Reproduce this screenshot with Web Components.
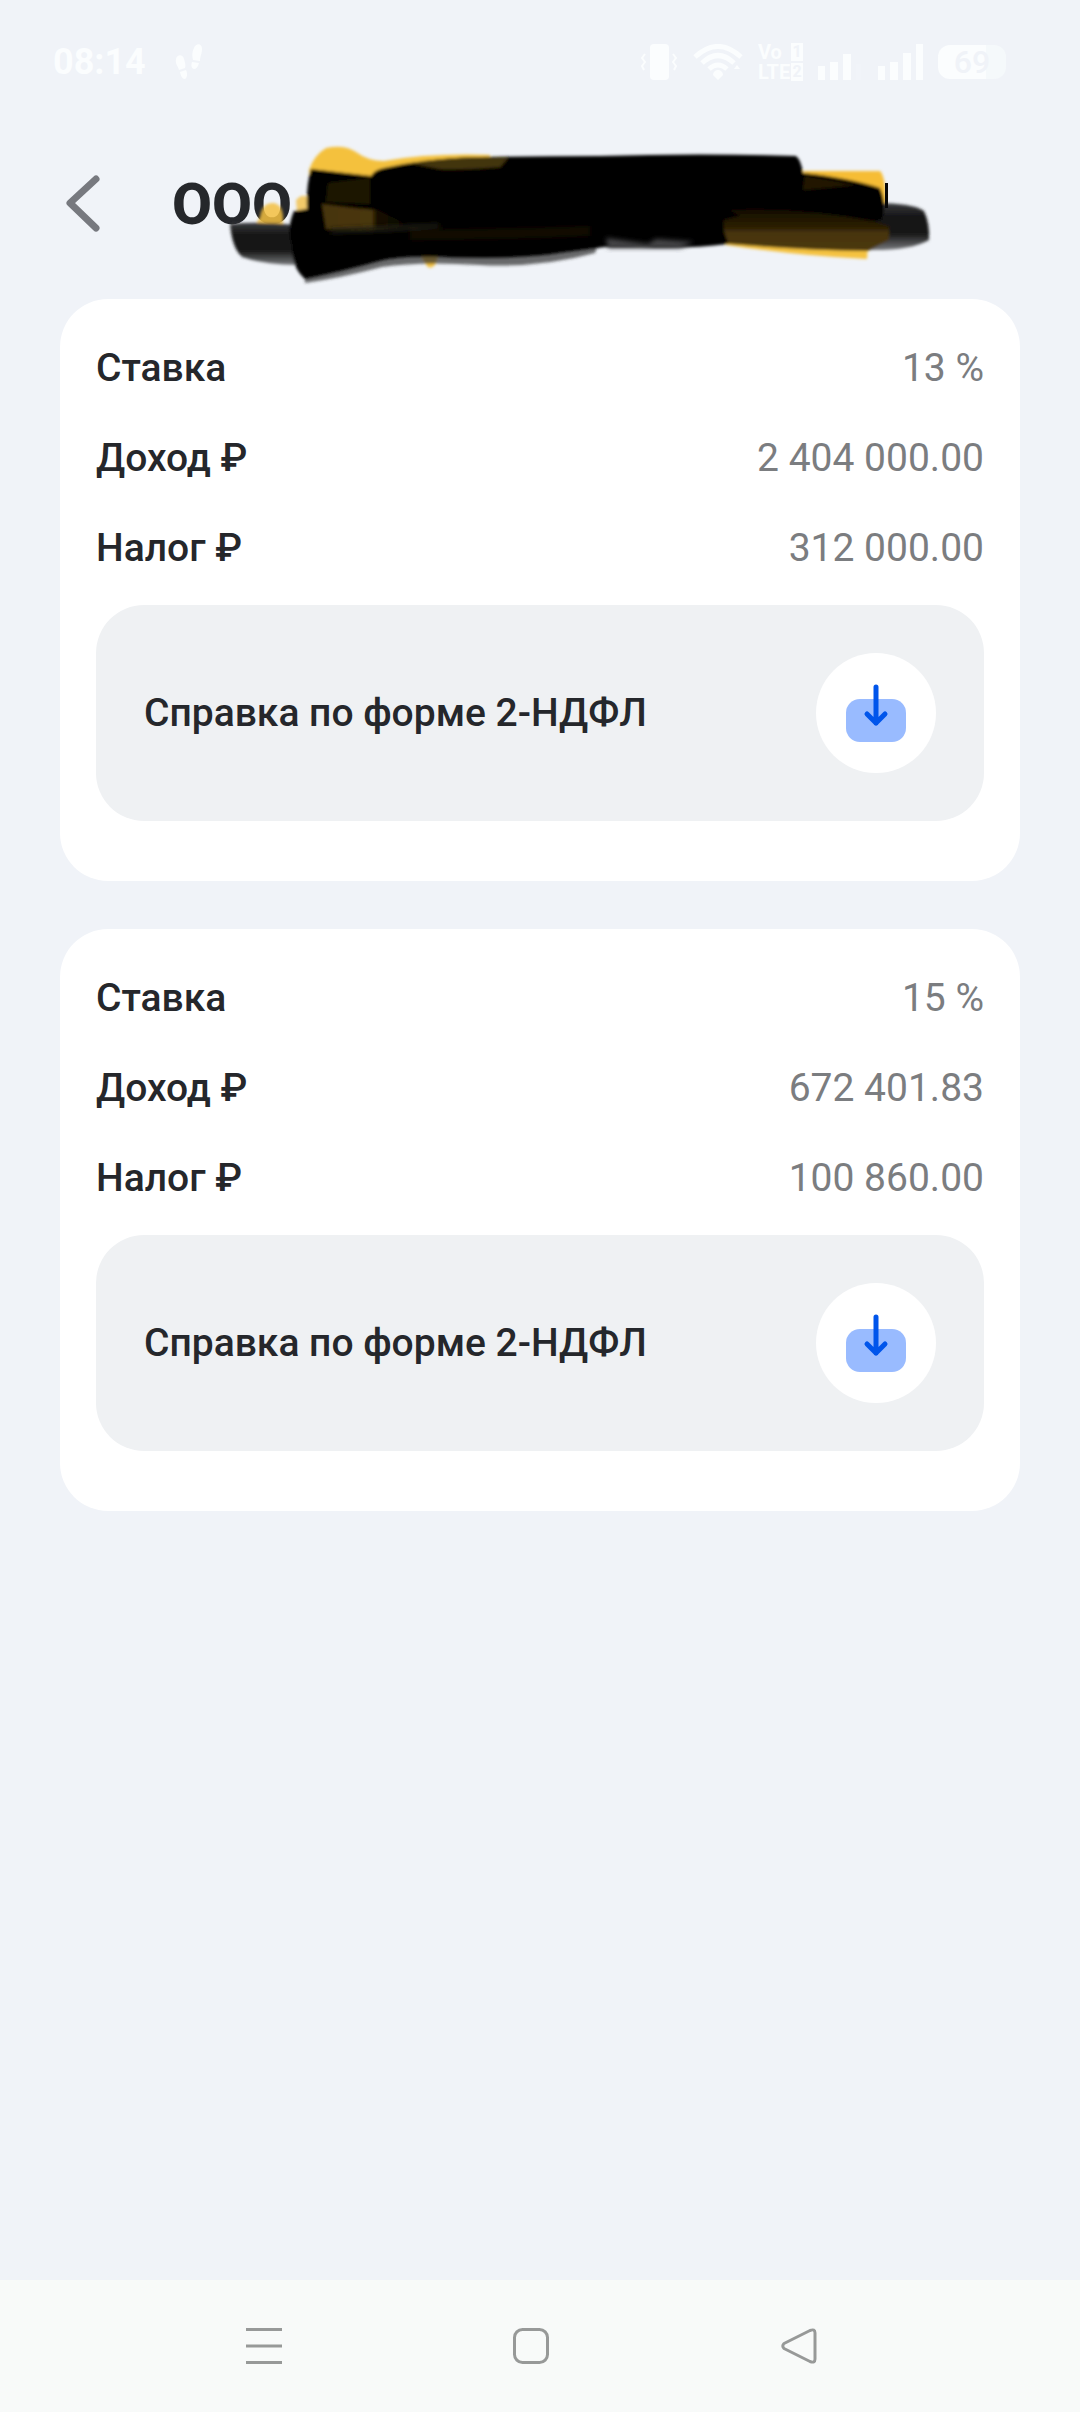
<!DOCTYPE html>
<html lang="ru">
<head>
<meta charset="utf-8">
<meta name="viewport" content="width=device-width">
<title>Справка о доходах</title>
<style>
  body {
    margin: 0;
    background: #f0f3f8;
    color: #25272b;
    font-family: Roboto, "Noto Sans", sans-serif;
  }
</style>
</head>
<body>
<income-page>
  <status-bar slot="status" time="08:14" battery="69"></status-bar>
  <page-header slot="header">ООО</page-header>
  <tax-card>
    <tax-row label="Ставка">13 %</tax-row>
    <tax-row label="Доход ₽">2 404 000.00</tax-row>
    <tax-row label="Налог ₽">312 000.00</tax-row>
    <download-panel slot="action">Справка по форме 2-НДФЛ</download-panel>
  </tax-card>
  <tax-card>
    <tax-row label="Ставка">15 %</tax-row>
    <tax-row label="Доход ₽">672 401.83</tax-row>
    <tax-row label="Налог ₽">100 860.00</tax-row>
    <download-panel slot="action">Справка по форме 2-НДФЛ</download-panel>
  </tax-card>
  <nav-bar slot="nav"></nav-bar>
</income-page>

<script>
const define = (name, html, setup) => {
  const template = document.createElement("template");
  template.innerHTML = html;
  customElements.define(name, class extends HTMLElement {
    constructor() {
      super();
      this.attachShadow({ mode: "open" });
      this.shadowRoot.appendChild(template.content.cloneNode(true));
    }

    connectedCallback() {
      if (setup) setup(this, this.shadowRoot);
    }
  });
};

define("income-page", /*html*/`
  <style>
    :host {
      display: flex;
      flex-direction: column;
      min-height: 100vh;
    }

    main {
      flex: 1;
      display: flex;
      flex-direction: column;
      gap: 48px;
      padding: 16px 60px 48px;
    }
  </style>
  <slot name="status"></slot>
  <slot name="header"></slot>
  <main><slot></slot></main>
  <slot name="nav"></slot>`);

define("status-bar", /*html*/`
  <style>
    :host {
      display: flex;
      align-items: center;
      height: 124px;
      padding: 0 74px 0 53px;
      box-sizing: border-box;
      color: #fbfdfe;
      fill: currentColor;
    }

    svg { display: block; }

    .time {
      font-size: 36px;
      line-height: 40px;
      font-weight: 700;
    }

    .steps { margin-left: 28px; }

    .icons {
      display: flex;
      align-items: center;
      gap: 15px;
      margin-left: auto;
    }

    .volte {
      display: grid;
      grid-template-columns: 33px 12px;
      grid-auto-rows: 20px;
      align-items: center;
      font-size: 20px;
      line-height: 20px;
      font-weight: 700;
    }

    .sim {
      background: currentColor;
      font-size: 16px;
      line-height: 18px;
      text-align: center;
    }

    .sim span { color: #f0f3f8; }

    .battery {
      width: 68px;
      height: 34px;
      border-radius: 12px;
      background: linear-gradient(90deg, #fbfdfe 70%, #f5f9fb 70%);
      color: #f0f3f8;
      font-size: 32px;
      line-height: 34px;
      font-weight: 500;
      text-align: center;
    }
  </style>
  <span class="time"></span>
  <svg class="steps" width="30" height="36" viewBox="0 0 30 36">
    <path d="M2 15c1-5 7-5 8 0 1 4 2 6 1 9l-6 2c-1-4-4-6-3-11zM6 28l6-2c2 4 1 8-1 9-3 0-4-3-5-7z"/>
    <path d="M20 4c2-5 8-5 8 1 0 5-2 7-2 12l-7-1c-1-4-1-8 1-12zM18 18l7 1c-1 4-3 6-5 6-3-1-3-4-2-7z"/>
  </svg>
  <div class="icons">
    <svg width="38" height="36" viewBox="0 0 38 36">
      <rect x="10" y="0" width="19" height="36" rx="4"/>
      <path d="M5 10l-3 4 3 4-3 4 2 4M33 10l3 4-3 4 3 4-2 4" fill="none" stroke="currentColor" stroke-width="2"/>
    </svg>
    <svg width="50" height="36" viewBox="0 0 50 36">
      <g fill="none" stroke="currentColor" stroke-width="5">
        <path d="M2 13Q25-8 48 13M9 19Q25 4 41 19M16 25Q25 17 34 25"/>
      </g>
      <path d="M25 26a5 5 0 0 1 5 5l-5 5-5-5a5 5 0 0 1 5-5zM41 25l3-4 3 4z"/>
    </svg>
    <div class="volte">
      <span>Vo</span><span class="sim"><span>1</span></span>
      <span>LTE</span><span class="sim"><span>2</span></span>
    </div>
    <svg width="45" height="36" viewBox="0 0 45 36">
      <path d="M0 22h7v14H0zM12 18h8v18h-8zM25 10h8v26h-8z"/>
      <path d="M38 20h5v16h-5z" opacity=".15"/>
    </svg>
    <svg width="45" height="36" viewBox="0 0 45 36">
      <path d="M0 22h7v14H0zM12 18h8v18h-8zM25 9h8v27h-8zM38 0h7v36h-7z"/>
    </svg>
    <div class="battery"></div>
  </div>`, (host, root) => {
    root.querySelector(".time").textContent = host.getAttribute("time");
    root.querySelector(".battery").textContent = host.getAttribute("battery");
  });

define("page-header", /*html*/`
  <style>
    :host {
      position: relative;
      display: flex;
      align-items: center;
      gap: 64px;
      height: 159px;
      padding: 0 60px 0 58px;
      box-sizing: border-box;
    }

    button {
      padding: 0;
      border: 0;
      background: none;
      cursor: pointer;
    }

    svg { display: block; }

    h1 {
      margin: 0;
      font-size: 58px;
      line-height: 64px;
      font-weight: 800;
    }

    /* marker strokes hiding the rest of the name */
    .marker {
      position: absolute;
      left: 0;
      top: 0;
      pointer-events: none;
    }
  </style>
  <button type="button" aria-label="Назад">
    <svg width="50" height="64" viewBox="0 0 50 64" fill="none" stroke="#77797f" stroke-width="7" stroke-linecap="round" stroke-linejoin="round">
      <path d="M38 7L12 31l26 25"/>
    </svg>
  </button>
  <h1><slot></slot></h1>
  <svg class="marker" width="1080" height="175" viewBox="0 124 1080 175" aria-hidden="true">
    <defs>
      <filter id="soft" x="-5%" y="-10%" width="110%" height="120%"><feGaussianBlur stdDeviation="1.4"/></filter>
      <filter id="softer" x="-20%" y="-20%" width="140%" height="140%"><feGaussianBlur stdDeviation="2.4"/></filter>
      <linearGradient id="tail" x1="0" y1="0" x2="0" y2="1">
        <stop offset="0" stop-color="#3a3b3e"/><stop offset=".3" stop-color="#151515"/>
        <stop offset=".65" stop-color="#141414"/><stop offset="1" stop-color="#77797c"/>
      </linearGradient>
      <linearGradient id="brown" x1="0" y1="0" x2="0" y2="1">
        <stop offset="0" stop-color="#140d00"/><stop offset=".45" stop-color="#2c1f04"/>
        <stop offset=".55" stop-color="#46340d"/><stop offset="1" stop-color="#4c3911"/>
      </linearGradient>
      <linearGradient id="patch" x1="0" y1="0" x2="1" y2="0">
        <stop offset="0" stop-color="#463409"/><stop offset=".55" stop-color="#4a370b"/>
        <stop offset=".6" stop-color="#1a1200"/><stop offset="1" stop-color="#000"/>
      </linearGradient>
    </defs>
    <g filter="url(#soft)">
      <path fill="#f3bf40" fill-opacity=".85" d="M260 217Q262 202 274 203Q284 205 283 222L280 230H263L257 222z"/>
      <path fill="#f2ca6a" d="M296 200Q303 192 310 199V222H298z"/>
      <path fill="#f4c13d" d="M309 170Q314 155 326 148Q344 144 356 152Q368 161 384 161Q430 153 490 155V180H310z"/>
      <path fill="#f6bd35" d="M802 171H880Q886 177 886 206L840 200z"/>
      <path fill="#f5c23f" d="M726 242L868 244L867 259Q800 256 726 245zM421 256H438L435 265Q430 270 427 266z"/>
      <path fill="url(#tail)" d="M230 224Q260 221 296 225V265Q262 264 242 257Q232 248 230 224z"/>
      <path fill="url(#tail)" d="M866 203Q912 202 924 211Q930 224 929 240Q910 251 866 250z"/>
      <!-- translucent rim along the underside of the strokes -->
      <path fill="#2d2d2e" fill-opacity=".7" d="M304 260L600 240L595 253Q540 268 480 265Q420 261 382 267Q340 278 305 283z"/>
      <path fill="#000" d="M311 169L371 176Q374 170 384 168Q430 158 480 157Q540 156 600 156Q700 153 796 156Q801 160 803 173Q850 178 880 188Q887 204 882 220L728 244Q690 249 640 247H605L560 253Q520 260 440 257Q400 256 380 261Q340 272 305 279Q292 268 292 247Q286 229 294 211L307 209Q306 186 311 169z"/>
      <path fill="#433611" d="M410 163Q460 155 508 158L500 167Q460 170 440 169z"/>
      <path fill="#1f1601" d="M328 183L370 178V204L326 202z"/>
      <path fill="url(#patch)" d="M322 204Q350 208 376 210L412 226Q380 231 326 229z"/>
      <path fill="#221803" d="M805 176Q836 181 856 185L803 190z"/>
      <path fill="url(#brown)" d="M730 210Q800 207 872 221L889 226V240L868 251Q800 250 729 244Q722 230 724 220L740 216z"/>
    </g>
    <g filter="url(#softer)">
      <path fill="#46474a" d="M606 238L648 244L656 239L694 242L680 248L608 248z"/>
      <path fill="#242118" d="M330 229Q390 226 440 224L440 227Q390 232 330 233z"/>
      <path fill="#1c1401" d="M410 230Q500 229 590 226V236Q500 240 410 240z" fill-opacity=".6"/>
    </g>
    <path fill="#080808" d="M885 183h3v25h-3z"/>
  </svg>`);

define("tax-card", /*html*/`
  <style>
    :host {
      display: block;
      padding: 24px 36px 60px;
      border-radius: 48px;
      background: #fff;
    }

    .rows { margin-bottom: 12px; }
  </style>
  <div class="rows"><slot></slot></div>
  <slot name="action"></slot>`);

define("tax-row", /*html*/`
  <style>
    :host {
      display: flex;
      align-items: center;
      justify-content: space-between;
      height: 90px;
      font-size: 39px;
      line-height: 46px;
    }

    .label { font-weight: 500; }

    .value { color: #7b7d80; }
  </style>
  <span class="label"></span>
  <span class="value"><slot></slot></span>`, (host, root) => {
    root.querySelector(".label").textContent = host.getAttribute("label");
  });

define("download-panel", /*html*/`
  <style>
    :host {
      display: flex;
      align-items: center;
      justify-content: space-between;
      padding: 48px;
      border-radius: 48px;
      background: #eff1f3;
      font-size: 39px;
      line-height: 46px;
      font-weight: 500;
    }

    button {
      padding: 0;
      border: 0;
      border-radius: 50%;
      background: #fff;
      cursor: pointer;
    }

    svg { display: block; }
  </style>
  <span><slot></slot></span>
  <button type="button" aria-label="Скачать">
    <svg width="120" height="120" viewBox="0 0 120 120">
      <rect x="30" y="46" width="60" height="43" rx="14" fill="#99bbff"/>
      <path d="M60 34v36M51 61l9 9 9-9" fill="none" stroke="#0055eb" stroke-width="5" stroke-linecap="round" stroke-linejoin="round"/>
    </svg>
  </button>`);

define("nav-bar", /*html*/`
  <style>
    :host {
      display: grid;
      grid-template-columns: repeat(3, 1fr);
      height: 132px;
      padding: 0 147px 0 130px;
      box-sizing: border-box;
      background: #f8faf9;
    }

    button {
      display: flex;
      align-items: center;
      justify-content: center;
      padding: 0;
      border: 0;
      background: none;
    }

    svg {
      fill: none;
      stroke: #979998;
      stroke-width: 3;
      stroke-linejoin: round;
    }
  </style>
  <button type="button" aria-label="Недавние">
    <svg width="36" height="36" viewBox="0 0 36 36"><path d="M0 1.500h36M0 18h36M0 34.500h36"/></svg>
  </button>
  <button type="button" aria-label="Домой">
    <svg width="36" height="36" viewBox="0 0 36 36"><rect x="1.500" y="1.500" width="33" height="33" rx="8"/></svg>
  </button>
  <button type="button" aria-label="Назад">
    <svg width="36" height="36" viewBox="0 0 36 36"><path d="M29 2.500L3 15.500Q.500 18 3 20.500L29 33.500Q34 35.500 34 31V5Q34 .500 29 2.500z"/></svg>
  </button>`);
</script>
</body>
</html>
